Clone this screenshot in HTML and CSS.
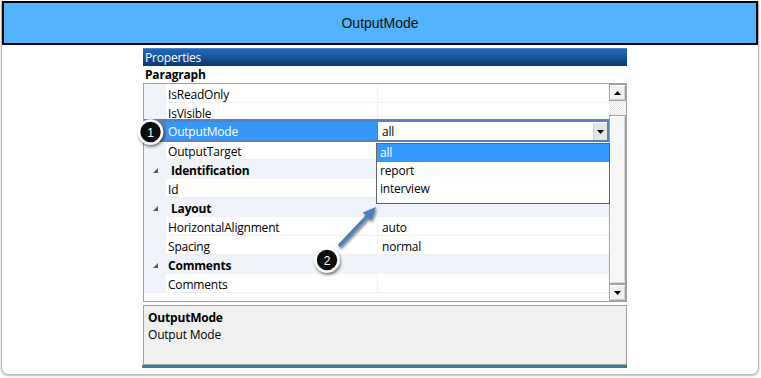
FILE: index.html
```html
<!DOCTYPE html>
<html>
<head>
<meta charset="utf-8">
<link rel="stylesheet" href="styles.css">
</head>
<body>
<div class="frame">
  <div class="header">OutputMode</div>
  <div class="panel">
    <div class="titlebar">Properties</div>
    <div class="object">Paragraph</div>
    <div class="grid">
      <div class="rows">
        <div class="row"><span class="gut"></span><span class="name">IsReadOnly</span><span class="val"></span></div>
        <div class="row"><span class="gut"></span><span class="name">IsVisible</span><span class="val"></span></div>
        <div class="row sel">
          <div class="band">
            <span class="bgut"></span>
            <span class="bname">OutputMode</span>
            <span class="combo"><span class="ctext">all</span><span class="cbtn"><svg width="7" height="4" viewBox="0 0 7 4"><polygon points="0,0 7,0 3.5,4" fill="#000"/></svg></span></span>
          </div>
        </div>
        <div class="row"><span class="gut"></span><span class="name">OutputTarget</span><span class="val"></span></div>
        <div class="row cat"><span class="gut"><svg class="tri" width="5" height="5" viewBox="0 0 5 5"><polygon points="5,0 5,5 0,5" fill="#5a5a5a"/></svg></span><span class="catname">Identification</span></div>
        <div class="row"><span class="gut"></span><span class="name">Id</span><span class="val"></span></div>
        <div class="row cat"><span class="gut"><svg class="tri" width="5" height="5" viewBox="0 0 5 5"><polygon points="5,0 5,5 0,5" fill="#5a5a5a"/></svg></span><span class="catname">Layout</span></div>
        <div class="row"><span class="gut"></span><span class="name">HorizontalAlignment</span><span class="val">auto</span></div>
        <div class="row"><span class="gut"></span><span class="name">Spacing</span><span class="val">normal</span></div>
        <div class="row cat"><span class="gut"><svg class="tri" width="5" height="5" viewBox="0 0 5 5"><polygon points="5,0 5,5 0,5" fill="#5a5a5a"/></svg></span><span class="catname cm">Comments</span></div>
        <div class="row"><span class="gut"></span><span class="name">Comments</span><span class="val"></span></div>
      </div>
      <div class="scroll">
        <div class="sbtn"><svg width="7" height="4" viewBox="0 0 7 4"><polygon points="3.5,0 7,4 0,4" fill="#000"/></svg></div>
        <div class="track"><div class="thumb"></div></div>
        <div class="sbtn"><svg width="7" height="4" viewBox="0 0 7 4"><polygon points="0,0 7,0 3.5,4" fill="#000"/></svg></div>
      </div>
      <div class="droplist">
        <div class="item on">all</div>
        <div class="item">report</div>
        <div class="item">interview</div>
      </div>
    </div>
    <div class="desc">
      <div class="dtitle">OutputMode</div>
      <div class="dtext">Output Mode</div>
    </div>
    <div class="teal"></div>
  </div>
</div>
<svg class="annot" width="761" height="378" viewBox="0 0 761 378">
  <defs>
    <filter id="sh" x="-50%" y="-50%" width="200%" height="200%">
      <feDropShadow dx="1" dy="2" stdDeviation="1.6" flood-color="#000" flood-opacity="0.55"/>
    </filter>
  </defs>
  <g filter="url(#sh)">
    <line x1="340" y1="245" x2="367" y2="216.5" stroke="#4f7fbf" stroke-width="3.6" stroke-linecap="round"/>
    <polygon points="376,207 371.5,220.6 362.7,212.4" fill="#4f7fbf"/>
  </g>
  <g filter="url(#sh)">
    <circle cx="150.5" cy="132" r="11.5" fill="#111" stroke="#fff" stroke-width="2.5"/>
    <circle cx="327" cy="260" r="11.5" fill="#111" stroke="#fff" stroke-width="2.5"/>
  </g>
  <text x="150.5" y="136.5" class="bnum">1</text>
  <text x="327" y="264.5" class="bnum">2</text>
</svg>
</body>
</html>
```
FILE: styles.css
```css
html, body {
  margin: 0;
  padding: 0;
}
body {
  width: 761px;
  height: 378px;
  overflow: hidden;
  position: relative;
  background: #fff;
  font-family: "Open Sans", "Noto Sans", sans-serif;
  color: #000;
}
.frame {
  margin: 0 2px 0 1px;
  height: 374px;
  box-sizing: border-box;
  border: 1px solid #b9b9b9;
  border-top: none;
  border-radius: 0 0 7px 7px;
  box-shadow: 0 1px 2px rgba(0, 0, 0, 0.25);
}
.header {
  margin-top: 1px;
  height: 44px;
  box-sizing: border-box;
  border: 2px solid #000;
  background: #52b4ff;
  display: flex;
  align-items: center;
  justify-content: center;
  font: 14px "Liberation Sans", Arial, sans-serif;
  color: #111;
}
.panel {
  margin: 3px 0 0 141px;
  width: 484px;
}
.titlebar {
  height: 18px;
  box-sizing: border-box;
  background: linear-gradient(#5b93d6 0, #2266b8 8%, #1a57a0 45%, #0a376b 100%);
  color: #fff;
  font-size: 12px;
  line-height: 19px;
  padding-left: 2px;
  letter-spacing: -0.2px;
}
.object {
  height: 17px;
  font-size: 12px;
  font-weight: 700;
  line-height: 18px;
  padding-left: 2px;
  letter-spacing: -0.2px;
}
.grid {
  position: relative;
  height: 219px;
  box-sizing: border-box;
  border: 1px solid #a0a0a0;
  display: flex;
}
.rows {
  width: 465px;
}
.row {
  display: flex;
  height: 19px;
  font-size: 12px;
  line-height: 21px;
  letter-spacing: -0.2px;
}
.gut {
  width: 22px;
  flex: none;
  background: #f0f4fa;
  display: flex;
  align-items: center;
}
.name {
  width: 209px;
  height: 18px;
  flex: none;
  padding-left: 2px;
  border-bottom: 1px solid #f0f0f0;
  border-right: 1px solid #f0f0f0;
}
.val {
  flex: 1;
  height: 18px;
  padding-left: 4px;
  border-bottom: 1px solid #f0f0f0;
}
.cat {
  background: #f0f4fa;
}
.tri {
  margin-left: 9px;
  margin-top: 2px;
}
.catname {
  font-weight: 700;
  padding-left: 5px;
}
.catname.cm {
  padding-left: 2px;
}
.sel {
  position: relative;
  z-index: 1;
}
.band {
  position: absolute;
  left: 0;
  right: 0;
  top: -3px;
  height: 23px;
  box-sizing: border-box;
  padding: 3px 2px 2px 0;
  background: #5682c2;
  display: flex;
}
.bgut {
  width: 22px;
  flex: none;
}
.bname {
  width: 209px;
  flex: none;
  padding-left: 2px;
  background: #3797f7;
  color: #fff;
  line-height: 20px;
}
.combo {
  flex: 1;
  margin-left: 1px;
  background: #fff;
  display: flex;
}
.ctext {
  flex: 1;
  padding-left: 4px;
  line-height: 20px;
}
.cbtn {
  width: 13px;
  margin: 1px 0 0;
  background: #e6e6e6;
  border-left: 1px solid #d0d0d0;
  display: flex;
  align-items: center;
  justify-content: center;
}
.scroll {
  width: 17px;
  display: flex;
  flex-direction: column;
}
.sbtn {
  height: 17px;
  flex: none;
  box-sizing: border-box;
  background: #f0f0f0;
  border: 1px solid #a0a0a0;
  box-shadow: inset 1px 1px #fff, inset -1px -1px #cfcfcf;
  display: flex;
  align-items: center;
  justify-content: center;
}
.track {
  flex: 1;
  padding-top: 14px;
  background: repeating-conic-gradient(#ffffff 0 25%, #e4e4e4 0 50%) 0 0 / 2px 2px;
  display: flex;
  flex-direction: column;
}
.thumb {
  flex: 1;
  box-sizing: border-box;
  background: #f6f6f6;
  border: 1px solid #a0a0a0;
  box-shadow: inset 1px 1px #fff, inset -1px -1px #d6d6d6;
}
.droplist {
  position: absolute;
  left: 232px;
  top: 59px;
  width: 234px;
  height: 61px;
  box-sizing: border-box;
  border: 1px solid #646464;
  background: #fff;
  z-index: 2;
  font-size: 12px;
  letter-spacing: -0.2px;
}
.item {
  height: 18px;
  line-height: 17px;
  padding-left: 3px;
}
.item.on {
  background: #3399ff;
  color: #fff;
}
.desc {
  margin-top: 3px;
  height: 60px;
  box-sizing: border-box;
  border: 1px solid #a0a0a0;
  background: #f0f0f0;
  padding: 3px 0 0 4px;
  font-size: 12px;
  line-height: 17px;
  letter-spacing: -0.2px;
}
.dtitle {
  font-weight: 700;
}
.teal {
  margin-left: -1px;
  width: 485px;
  height: 3px;
  background: #3b7d97;
}
.annot {
  position: absolute;
  left: 0;
  top: 0;
  z-index: 5;
  pointer-events: none;
}
.bnum {
  fill: #fff;
  font: 12px "Liberation Sans", Arial, sans-serif;
  text-anchor: middle;
}
```
